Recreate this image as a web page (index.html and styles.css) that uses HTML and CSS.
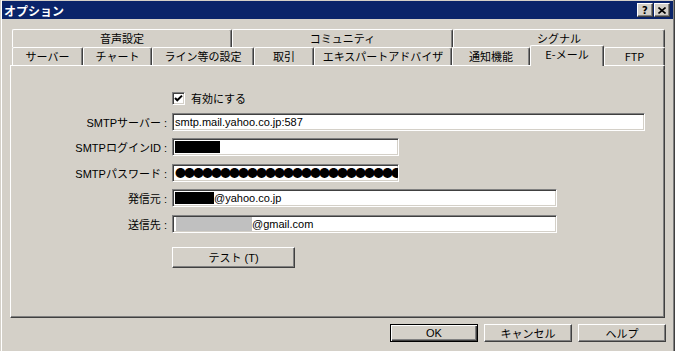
FILE: index.html
```html
<!DOCTYPE html>
<html lang="ja">
<head>
  <meta charset="UTF-8">
  <title>オプション</title>
  <link rel="stylesheet" href="styles.css">
</head>
<body>
  <div class="window">
    <div class="titlebar">
      <span class="title">オプション</span>
      <div class="caption-buttons">
        <span class="caption-btn">?</span>
        <span class="caption-btn">
          <svg width="8" height="7" viewBox="0 0 8 7"><path d="M0.5 0.5 L7.5 6.5 M7.5 0.5 L0.5 6.5" stroke="#000" stroke-width="1.6"/></svg>
        </span>
      </div>
    </div>

    <div class="tabs">
      <div class="tab-row">
        <div class="tab w-sound">音声設定</div>
        <div class="tab w-community">コミュニティ</div>
        <div class="tab w-signal">シグナル</div>
      </div>
      <div class="tab-row">
        <div class="tab w-server">サーバー</div>
        <div class="tab w-chart">チャート</div>
        <div class="tab w-line">ライン等の設定</div>
        <div class="tab w-trade">取引</div>
        <div class="tab w-expert">エキスパートアドバイザ</div>
        <div class="tab w-notify">通知機能</div>
        <div class="tab w-email active">E-メール</div>
        <div class="tab w-ftp">FTP</div>
      </div>
    </div>

    <div class="panel">
      <div class="form">
        <span></span>
        <label class="check">
          <span class="checkbox">
            <svg width="9" height="9" viewBox="0 0 9 9"><path d="M1 4 L3.3 6.3 L8 1.6" fill="none" stroke="#000" stroke-width="2"/></svg>
          </span>
          有効にする
        </label>

        <span class="label">SMTPサーバー :</span>
        <div class="field wide">smtp.mail.yahoo.co.jp:587</div>

        <span class="label">SMTPログインID :</span>
        <div class="field short"><span class="redact black login"></span></div>

        <span class="label">SMTPパスワード :</span>
        <div class="field short"><span class="dots">●●●●●●●●●●●●●●●●●●●●●●●●●</span></div>

        <span class="label">発信元 :</span>
        <div class="field mid"><span class="redact black sender"></span>@yahoo.co.jp</div>

        <span class="label">送信先 :</span>
        <div class="field mid"><span class="redact gray"></span>@gmail.com</div>

        <span></span>
        <button class="btn test">テスト (T)</button>
      </div>
    </div>

    <div class="footer">
      <button class="btn dialog default">OK</button>
      <button class="btn dialog">キャンセル</button>
      <button class="btn dialog">ヘルプ</button>
    </div>
  </div>
</body>
</html>
```

FILE: styles.css
```css
body {
  margin: 0;
  font-family: "Liberation Sans", "Noto Sans CJK JP", sans-serif;
  font-size: 11px;
  color: #000;
}

.window {
  width: 675px;
  height: 351px;
  background: #d4d0c8;
  box-shadow: inset 1px 0 #d4d0c8, inset 2px 0 #fff, inset -1px 0 #404040, inset -2px 0 #808080;
  overflow: hidden;
}

/* title bar */
.titlebar {
  margin: 1px 2px 0;
  height: 18px;
  padding: 0 3px 0 2px;
  background: #0a246a;
  display: flex;
  align-items: center;
  justify-content: space-between;
}

.title {
  color: #fff;
  font-family: "Noto Sans CJK JP", sans-serif;
  font-weight: bold;
  font-size: 12px;
}

.caption-buttons {
  display: flex;
  gap: 1px;
}

.caption-btn {
  width: 16px;
  height: 14px;
  box-sizing: border-box;
  background: #d4d0c8;
  border-top: 1px solid #fff;
  border-left: 1px solid #fff;
  border-right: 1px solid #404040;
  border-bottom: 1px solid #404040;
  box-shadow: inset -1px -1px #808080;
  display: flex;
  align-items: center;
  justify-content: center;
  font-family: "DejaVu Sans", sans-serif;
  font-weight: bold;
  font-size: 10px;
}

/* tabs */
.tabs {
  margin-top: 10px;
  padding-left: 12px;
}

.tab-row {
  display: flex;
  height: 18px;
}

.tab {
  box-sizing: border-box;
  height: 18px;
  background: #d4d0c8;
  border-top: 1px solid #fff;
  border-left: 1px solid #fff;
  border-right: 1px solid #404040;
  box-shadow: inset -1px 0 #808080;
  border-radius: 2px 2px 0 0;
  text-align: center;
  line-height: 16px;
  font-family: "Noto Sans CJK JP", sans-serif;
  white-space: nowrap;
}

.tab.active {
  height: 21px;
  margin-top: -2px;
  line-height: 17px;
  z-index: 1;
}

.w-sound { flex: 0 0 220px; }
.w-community { flex: 0 0 221px; }
.w-signal { flex: 0 0 212px; }
.w-server { flex: 0 0 71px; }
.w-chart { flex: 0 0 69px; }
.w-line { flex: 0 0 102px; }
.w-trade { flex: 0 0 60px; }
.w-expert { flex: 0 0 138px; }
.w-notify { flex: 0 0 78px; }
.w-email { flex: 0 0 74px; }
.w-ftp { flex: 0 0 61px; }

/* panel */
.panel {
  margin-left: 10px;
  width: 655px;
  height: 253px;
  box-sizing: border-box;
  border-top: 1px solid #fff;
  border-left: 1px solid #fff;
  border-right: 1px solid #404040;
  border-bottom: 1px solid #404040;
  box-shadow: inset -1px -1px #808080;
}

.form {
  display: grid;
  grid-template-columns: 156px auto;
  column-gap: 5px;
  row-gap: 7.5px;
  padding-top: 25px;
  align-items: center;
  justify-items: start;
}

.label {
  justify-self: end;
  white-space: nowrap;
}

.check {
  display: flex;
  align-items: center;
  gap: 6px;
  height: 14px;
  font-family: "Noto Sans CJK JP", sans-serif;
}

.checkbox,
.field {
  box-sizing: border-box;
  background: #fff;
  border-top: 1px solid #808080;
  border-left: 1px solid #808080;
  border-right: 1px solid #fff;
  border-bottom: 1px solid #fff;
  box-shadow: inset 1px 1px #404040, inset -1px -1px #d4d0c8;
}

.checkbox {
  width: 13px;
  height: 13px;
  display: flex;
  align-items: center;
  justify-content: center;
}

.field {
  height: 18px;
  padding: 0 2px;
  display: flex;
  align-items: center;
  overflow: hidden;
  white-space: nowrap;
}

.field.wide { width: 473px; }
.field.short { width: 227px; }
.field.mid { width: 385px; }

.redact {
  display: inline-block;
  flex: none;
}

.redact.black {
  height: 12px;
  background: #000;
}

.redact.login { width: 45px; }
.redact.sender { width: 39px; }

.redact.gray {
  width: 76px;
  height: 14px;
  margin-left: 1px;
  background: #c0c0c0;
}

.dots {
  font-family: "Noto Sans CJK JP", sans-serif;
  font-size: 11px;
  letter-spacing: -2px;
  line-height: 1;
}

/* buttons */
.btn {
  box-sizing: border-box;
  padding: 0;
  background: #d4d0c8;
  border-top: 1px solid #fff;
  border-left: 1px solid #fff;
  border-right: 1px solid #404040;
  border-bottom: 1px solid #404040;
  box-shadow: inset -1px -1px #808080;
  font-family: "Liberation Sans", "Noto Sans CJK JP", sans-serif;
  font-size: 11px;
  color: #000;
}

.btn.test {
  width: 123px;
  height: 21px;
  margin-top: 6.5px;
}

.footer {
  display: flex;
  justify-content: flex-end;
  gap: 6px;
  padding: 6px 9px 0 0;
}

.btn.dialog {
  width: 88px;
  height: 18px;
}

.btn.default {
  border: 1px solid #000;
  box-shadow: inset 1px 1px #fff, inset -1px -1px #404040, inset -2px -2px #808080;
}
```
